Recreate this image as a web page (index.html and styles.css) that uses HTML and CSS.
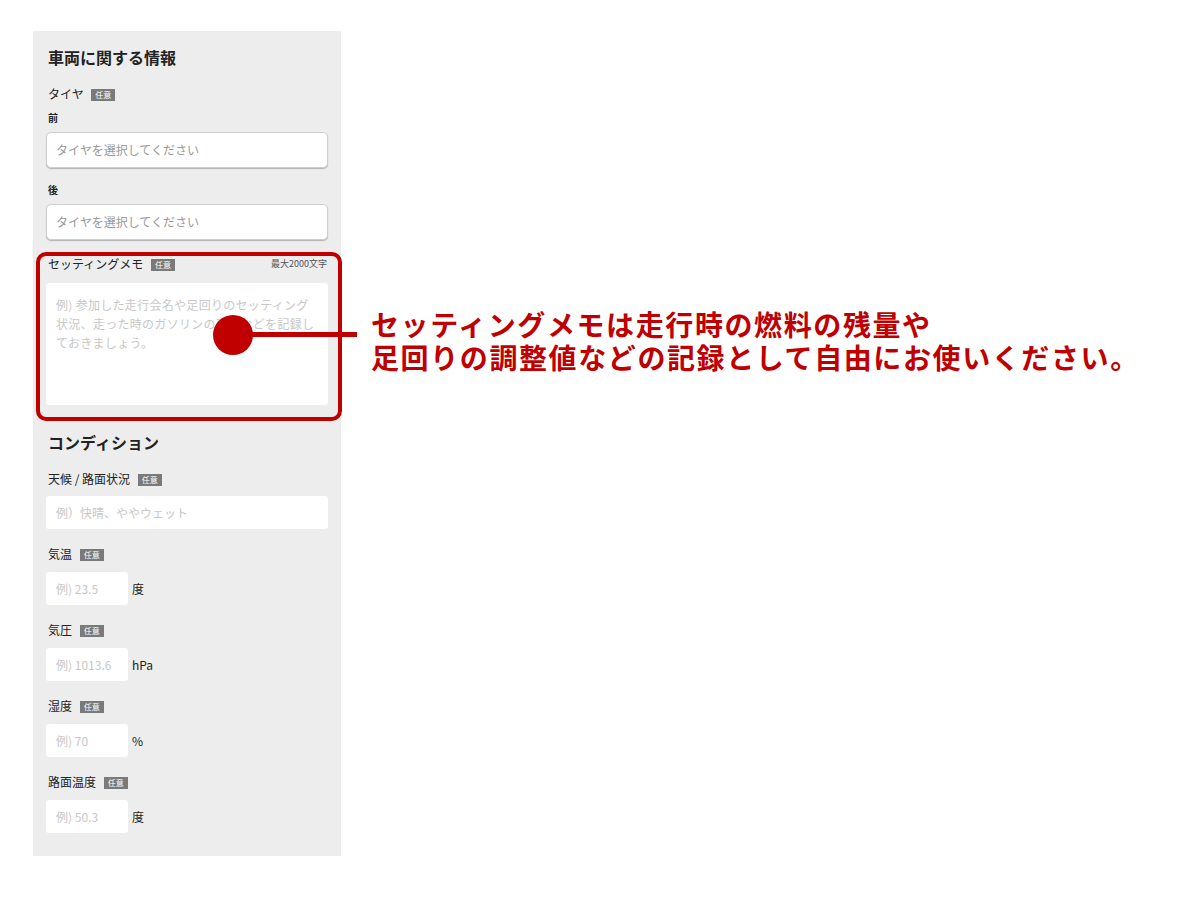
FILE: index.html
```html
<!DOCTYPE html>
<html lang="ja">
<head>
    <meta charset="utf-8">
    <title>車両に関する情報</title>
    <link rel="stylesheet" href="styles.css">
</head>
<body>
    <div class="panel">
        <h2 class="section-title">車両に関する情報</h2>

        <div class="field-label first">タイヤ <span class="badge">任意</span></div>
        <div class="sub-label">前</div>
        <div class="select-box">タイヤを選択してください</div>
        <div class="sub-label rear">後</div>
        <div class="select-box">タイヤを選択してください</div>

        <div class="memo">
            <div class="memo-head">
                <span class="field-label">セッティングメモ <span class="badge">任意</span></span>
                <span class="max-length">最大2000文字</span>
            </div>
            <div class="memo-box">
                例) 参加した走行会名や足回りのセッティング<br>
                状況、走った時のガソリンの残量などを記録し<br>
                ておきましょう。
            </div>

            <!-- annotation -->
            <div class="note-frame"></div>
            <div class="note-line"></div>
            <div class="note-dot"></div>
            <div class="note-text">
                <div>セッティングメモは走行時の燃料の残量や</div>
                <div>足回りの調整値などの記録として自由にお使いください。</div>
            </div>
        </div>

        <h2 class="section-title condition">コンディション</h2>

        <div class="field-label first">天候 / 路面状況 <span class="badge">任意</span></div>
        <div class="text-box">例）快晴、ややウェット</div>

        <div class="field-label">気温 <span class="badge">任意</span></div>
        <div class="unit-row">
            <div class="text-box small">例) 23.5</div>
            <span class="unit">度</span>
        </div>

        <div class="field-label">気圧 <span class="badge">任意</span></div>
        <div class="unit-row">
            <div class="text-box small">例) 1013.6</div>
            <span class="unit">hPa</span>
        </div>

        <div class="field-label">湿度 <span class="badge">任意</span></div>
        <div class="unit-row">
            <div class="text-box small">例) 70</div>
            <span class="unit">%</span>
        </div>

        <div class="field-label">路面温度 <span class="badge">任意</span></div>
        <div class="unit-row">
            <div class="text-box small">例) 50.3</div>
            <span class="unit">度</span>
        </div>
    </div>
</body>
</html>
```

FILE: styles.css
```css
body { margin: 0; background: #fff; color: #222; font-family: "Noto Sans CJK JP", "Noto Sans", sans-serif; }

.panel {
    width: 282px;
    margin: 31px 0 0 33px;
    padding: 14px 13px 23px;
    background: #ededed;
}

.section-title { margin: 0; padding-left: 2px; font-size: 16px; line-height: 24px; font-weight: bold; }
.section-title.condition { margin-top: 25px; }

.field-label { display: block; margin-top: 16px; padding-left: 2px; font-size: 12px; line-height: 18px; }
.field-label.first { margin-top: 16px; }

.badge {
    display: inline-block;
    margin-left: 5px;
    padding: 0 4px;
    background: #7a7a7a;
    color: #fff;
    font-size: 8px;
    line-height: 12px;
    vertical-align: 1px;
}

.sub-label { margin-top: 8px; padding-left: 2px; font-size: 10px; line-height: 14px; font-weight: bold; }
.sub-label.rear { margin-top: 15px; }

.select-box {
    margin-top: 7px;
    height: 34px;
    padding-left: 9px;
    background: #fff;
    border: 1px solid #cfcfcf;
    border-radius: 5px;
    box-shadow: 0 1px 1px rgba(0,0,0,0.25);
    color: #999;
    font-size: 12px;
    line-height: 34px;
}

.memo { position: relative; margin-top: 15px; }
.memo-head { display: flex; justify-content: space-between; align-items: center; }
.memo-head .field-label { margin-top: 0; }
.max-length { padding-right: 1px; color: #555; font-size: 9px; line-height: 18px; }

.memo-box {
    margin-top: 10px;
    height: 122px;
    box-sizing: border-box;
    padding: 12px 10px;
    background: #fff;
    border-radius: 3px;
    color: #c8c8c8;
    font-size: 12px;
    line-height: 19px;
    letter-spacing: 0.3px;
    white-space: nowrap;
}

.note-frame {
    position: absolute;
    top: -3px; left: -10px; right: -14px; bottom: -16px;
    border: 4px solid #c00000;
    border-radius: 10px;
}
.note-line {
    position: absolute;
    left: 187px; top: 77px;
    width: 124px; height: 5px;
    background: #c00000;
}
.note-dot {
    position: absolute;
    left: 167px; top: 60px;
    width: 40px; height: 40px;
    border-radius: 50%;
    background: #c00000;
}
.note-text {
    position: absolute;
    left: 325px; top: 53px;
    color: #c00000;
    font-size: 28px;
    line-height: 33px;
    font-weight: bold;
    letter-spacing: 1.6px;
    white-space: nowrap;
}

.text-box {
    margin-top: 8px;
    height: 33px;
    padding-left: 10px;
    background: #fff;
    border-radius: 3px;
    color: #c8c8c8;
    font-size: 12px;
    line-height: 33px;
}
.unit-row { display: flex; align-items: center; gap: 4px; margin-top: 9px; }
.unit-row .text-box { margin-top: 0; }
.text-box.small { width: 72px; }
.unit { font-size: 12px; }
```
